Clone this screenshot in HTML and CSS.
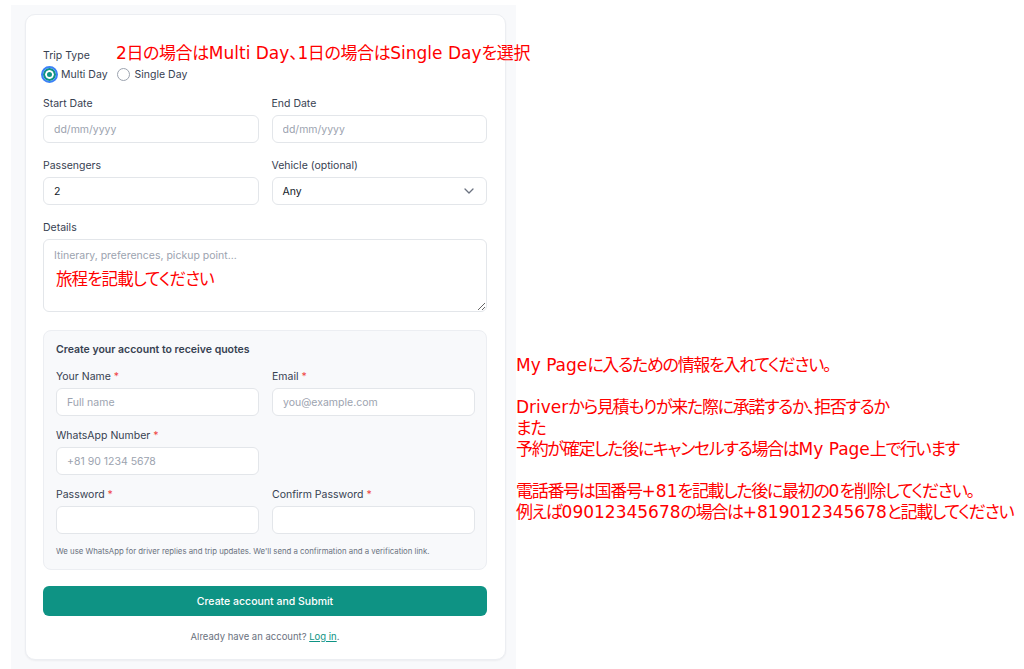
FILE: index.html
```html
<!DOCTYPE html>
<html lang="ja">
<head>
<meta charset="utf-8">
<title>Trip request</title>
<link rel="stylesheet" href="styles.css">
</head>
<body>
<div class="page">
  <form class="card">
    <p class="note note-trip">2日の場合は<span class="en">Multi Day</span>、1日の場合は<span class="en">Single Day</span>を選択</p>
    <p class="note note-details">旅程を記載してください</p>

    <div class="field trip">
      <div class="label">Trip Type</div>
      <div class="radios">
        <label class="radio"><span class="dot on"></span>Multi Day</label>
        <label class="radio"><span class="dot"></span>Single Day</label>
      </div>
    </div>

    <div class="row">
      <div class="field">
        <div class="label">Start Date</div>
        <input class="input" type="text" placeholder="dd/mm/yyyy">
      </div>
      <div class="field">
        <div class="label">End Date</div>
        <input class="input" type="text" placeholder="dd/mm/yyyy">
      </div>
    </div>

    <div class="row">
      <div class="field">
        <div class="label">Passengers</div>
        <input class="input" type="text" value="2">
      </div>
      <div class="field">
        <div class="label">Vehicle (optional)</div>
        <div class="input select">
          <span>Any</span>
          <svg width="10" height="6" viewBox="0 0 10 6"><path d="M1 1l4 4 4-4" fill="none" stroke="#6b7280" stroke-width="1.3" stroke-linecap="round" stroke-linejoin="round"/></svg>
        </div>
      </div>
    </div>

    <div class="field">
      <div class="label">Details</div>
      <textarea class="input textarea" placeholder="Itinerary, preferences, pickup point..."></textarea>
    </div>

    <div class="account">
      <div class="account-title">Create your account to receive quotes</div>
      <div class="row tight">
        <div class="field">
          <div class="label">Your Name <span class="req">*</span></div>
          <input class="input" type="text" placeholder="Full name">
        </div>
        <div class="field">
          <div class="label">Email <span class="req">*</span></div>
          <input class="input" type="text" placeholder="you@example.com">
        </div>
      </div>
      <div class="row tight">
        <div class="field">
          <div class="label">WhatsApp Number <span class="req">*</span></div>
          <input class="input" type="text" placeholder="+81 90 1234 5678">
        </div>
        <div></div>
      </div>
      <div class="row tight">
        <div class="field">
          <div class="label">Password <span class="req">*</span></div>
          <input class="input" type="password">
        </div>
        <div class="field">
          <div class="label">Confirm Password <span class="req">*</span></div>
          <input class="input" type="password">
        </div>
      </div>
      <p class="hint">We use WhatsApp for driver replies and trip updates. We'll send a confirmation and a verification link.</p>
    </div>

    <button class="submit" type="button">Create account and Submit</button>
    <p class="login">Already have an account? <a href="#">Log in</a>.</p>
  </form>
</div>

<div class="notes">
  <p><span class="en">My Page</span>に入るための情報を入れてください。</p>
  <p>&nbsp;</p>
  <p><span class="en">Driver</span>から見積もりが来た際に承諾するか、拒否するか</p>
  <p>また</p>
  <p>予約が確定した後にキャンセルする場合は<span class="en">My Page</span>上で行います</p>
  <p>&nbsp;</p>
  <p>電話番号は国番号<span class="en">+81</span>を記載した後に最初の<span class="en">0</span>を削除してください。</p>
  <p>例えば<span class="en">09012345678</span>の場合は<span class="en">+819012345678</span>と記載してください</p>
</div>
</body>
</html>
```
FILE: styles.css
```css
* { box-sizing: border-box; }

html, body {
  margin: 0;
  height: 100%;
}

body {
  display: flex;
  align-items: stretch;
  background: #ffffff;
  font-family: Inter, "Noto Sans", sans-serif;
  color: #374151;
  overflow: hidden;
}

.page {
  margin: 5px 0 0 11px;
  width: 505px;
  flex: none;
  background: #f8f9fb;
  padding: 9px 10px 0 14px;
}

.card {
  position: relative;
  width: 481px;
  background: #ffffff;
  border: 1px solid #eceef2;
  border-radius: 10px;
  box-shadow: 0 1px 2px rgba(16, 24, 40, 0.05);
  padding: 33px 18px 14px 17px;
  display: flex;
  flex-direction: column;
  gap: 15px;
}

.note {
  position: absolute;
  margin: 0;
  color: #ff0000;
  font-family: "DejaVu Sans", "Noto Sans CJK JP", sans-serif;
  font-feature-settings: "palt";
  font-size: 17px;
  line-height: 22px;
  white-space: nowrap;
}
.note-trip { left: 90px; top: 27px; letter-spacing: -0.4px; }
.note-details { left: 30px; top: 254px; font-size: 16.5px; letter-spacing: -0.9px; }

.en { letter-spacing: 0; }

.field {
  display: flex;
  flex-direction: column;
  gap: 3px;
  min-width: 0;
}

.trip { gap: 2px; margin-bottom: -1px; }

.label {
  font-size: 10.5px;
  line-height: 16px;
  color: #374151;
}

.req { color: #ef4444; }

.radios {
  display: flex;
  gap: 9px;
  height: 16px;
  align-items: center;
}

.radio {
  display: flex;
  align-items: center;
  gap: 5px;
  font-size: 10.5px;
  color: #374151;
}

.dot {
  width: 13px;
  height: 13px;
  border-radius: 50%;
  border: 1px solid #9ca3af;
  background: #fff;
}
.dot.on {
  border: 2px solid #0e9384;
  background: #0e9384;
  box-shadow: inset 0 0 0 2px #ffffff;
  outline: 2px solid #3b82f6;
  outline-offset: 0;
}

.row {
  display: grid;
  grid-template-columns: 1fr 1fr;
  gap: 13px;
}

.input {
  width: 100%;
  height: 28px;
  border: 1px solid #e3e6ea;
  border-radius: 6px;
  background: #fff;
  padding: 0 10px;
  font-family: inherit;
  font-size: 10.5px;
  color: #111827;
  outline: none;
}
.input::placeholder { color: #9ca3af; }

.select {
  display: flex;
  align-items: center;
  justify-content: space-between;
  padding-right: 12px;
}

.textarea {
  height: 73px;
  padding: 8px 10px;
  resize: vertical;
  display: block;
  line-height: 16px;
}

.account {
  margin-top: 3px;
  background: #f8f9fb;
  border: 1px solid #eceef2;
  border-radius: 8px;
  padding: 11px 11px 12px 12px;
  display: flex;
  flex-direction: column;
  gap: 12px;
}

.account-title {
  font-size: 10.5px;
  font-weight: 600;
  line-height: 16px;
  color: #374151;
  margin-bottom: -1px;
}

.hint {
  margin: -1px 0 0;
  font-size: 7.8px;
  line-height: 12px;
  color: #6b7280;
}

.submit {
  margin-top: 1px;
  height: 30px;
  width: 100%;
  border: none;
  border-radius: 6px;
  background: #0e9384;
  color: #ffffff;
  font-family: inherit;
  font-size: 10.5px;
  font-weight: 500;
}

.login {
  margin: -2px 0 0;
  text-align: center;
  font-size: 9.5px;
  line-height: 16px;
  color: #6b7280;
}
.login a {
  color: #0e9384;
  text-decoration: underline;
}

.notes {
  margin: 355px 0 0 0;
  color: #ff0000;
  font-family: "DejaVu Sans", "Noto Sans CJK JP", sans-serif;
  font-feature-settings: "palt";
  font-size: 17px;
  line-height: 21px;
  letter-spacing: -1.3px;
  white-space: nowrap;
}
.notes p { margin: 0; }
```
